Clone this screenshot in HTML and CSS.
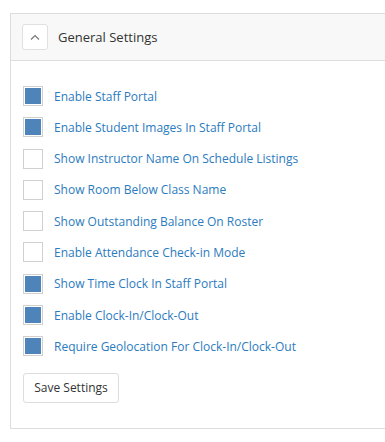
FILE: index.html
```html
<!DOCTYPE html>
<html lang="en">
<head>
    <meta charset="UTF-8">
    <meta name="viewport" content="width=device-width, initial-scale=1.0">
    <title>General Settings</title>
    <link rel="stylesheet" href="styles.css">
</head>
<body>

    <div class="panel">
        <div class="panel-heading">
            <button type="button" class="toggle-btn" aria-label="Collapse">
                <svg width="10" height="6" viewBox="0 0 10 6"><path d="M1 5.5 L5 1.5 L9 5.5" fill="none" stroke="#777" stroke-width="1.2"/></svg>
            </button>
            <span class="panel-title">General Settings</span>
        </div>

        <div class="panel-body">
            <ul class="settings-list">
                <li><span class="check checked"></span><span class="label">Enable Staff Portal</span></li>
                <li><span class="check checked"></span><span class="label">Enable Student Images In Staff Portal</span></li>
                <li><span class="check"></span><span class="label">Show Instructor Name On Schedule Listings</span></li>
                <li><span class="check"></span><span class="label">Show Room Below Class Name</span></li>
                <li><span class="check"></span><span class="label">Show Outstanding Balance On Roster</span></li>
                <li><span class="check"></span><span class="label">Enable Attendance Check-in Mode</span></li>
                <li><span class="check checked"></span><span class="label">Show Time Clock In Staff Portal</span></li>
                <li><span class="check checked"></span><span class="label">Enable Clock-In/Clock-Out</span></li>
                <li><span class="check checked"></span><span class="label">Require Geolocation For Clock-In/Clock-Out</span></li>
            </ul>

            <button type="button" class="save-btn">Save Settings</button>
        </div>
    </div>

</body>
</html>
```

FILE: styles.css
```css
body {
    font-family: "Open Sans", Arial, sans-serif;
    background: #fff;
    margin: 0;
    padding: 13px 0 0 10px;
}

.panel {
    border: 1px solid #ddd;
    border-right: none;
    height: 416px;
    box-sizing: border-box;
}

.panel-heading {
    display: flex;
    align-items: center;
    height: 46px;
    padding: 0 11px;
    background: #f8f8f8;
    border-bottom: 1px solid #ddd;
}

.toggle-btn {
    width: 26px;
    height: 26px;
    padding: 0;
    display: flex;
    align-items: center;
    justify-content: center;
    background: #fff;
    border: 1px solid #e0e0e0;
    border-radius: 3px;
}

.panel-title {
    margin-left: 10px;
    font-size: 13px;
    color: #333;
}

.panel-body {
    padding: 25px 12px 0 12px;
}

.settings-list {
    list-style: none;
    margin: 0;
    padding: 0;
}

.settings-list li {
    display: flex;
    align-items: center;
    height: 20px;
    margin-bottom: 11.3px;
}

.check {
    width: 20px;
    height: 20px;
    box-sizing: border-box;
    border: 1px solid #d0d0d0;
    background: #fff;
    padding: 1px;
    flex-shrink: 0;
}

.check.checked::after {
    content: "";
    display: block;
    width: 16px;
    height: 16px;
    background: #4f84ba;
}

.label {
    margin-left: 11px;
    font-size: 12px;
    color: #2b7bc0;
}

.save-btn {
    margin-top: 5px;
    width: 96px;
    height: 30px;
    padding: 0;
    font-family: "Open Sans", Arial, sans-serif;
    font-size: 12px;
    color: #333;
    background: #fff;
    border: 1px solid #ddd;
    border-radius: 3px;
}
```
